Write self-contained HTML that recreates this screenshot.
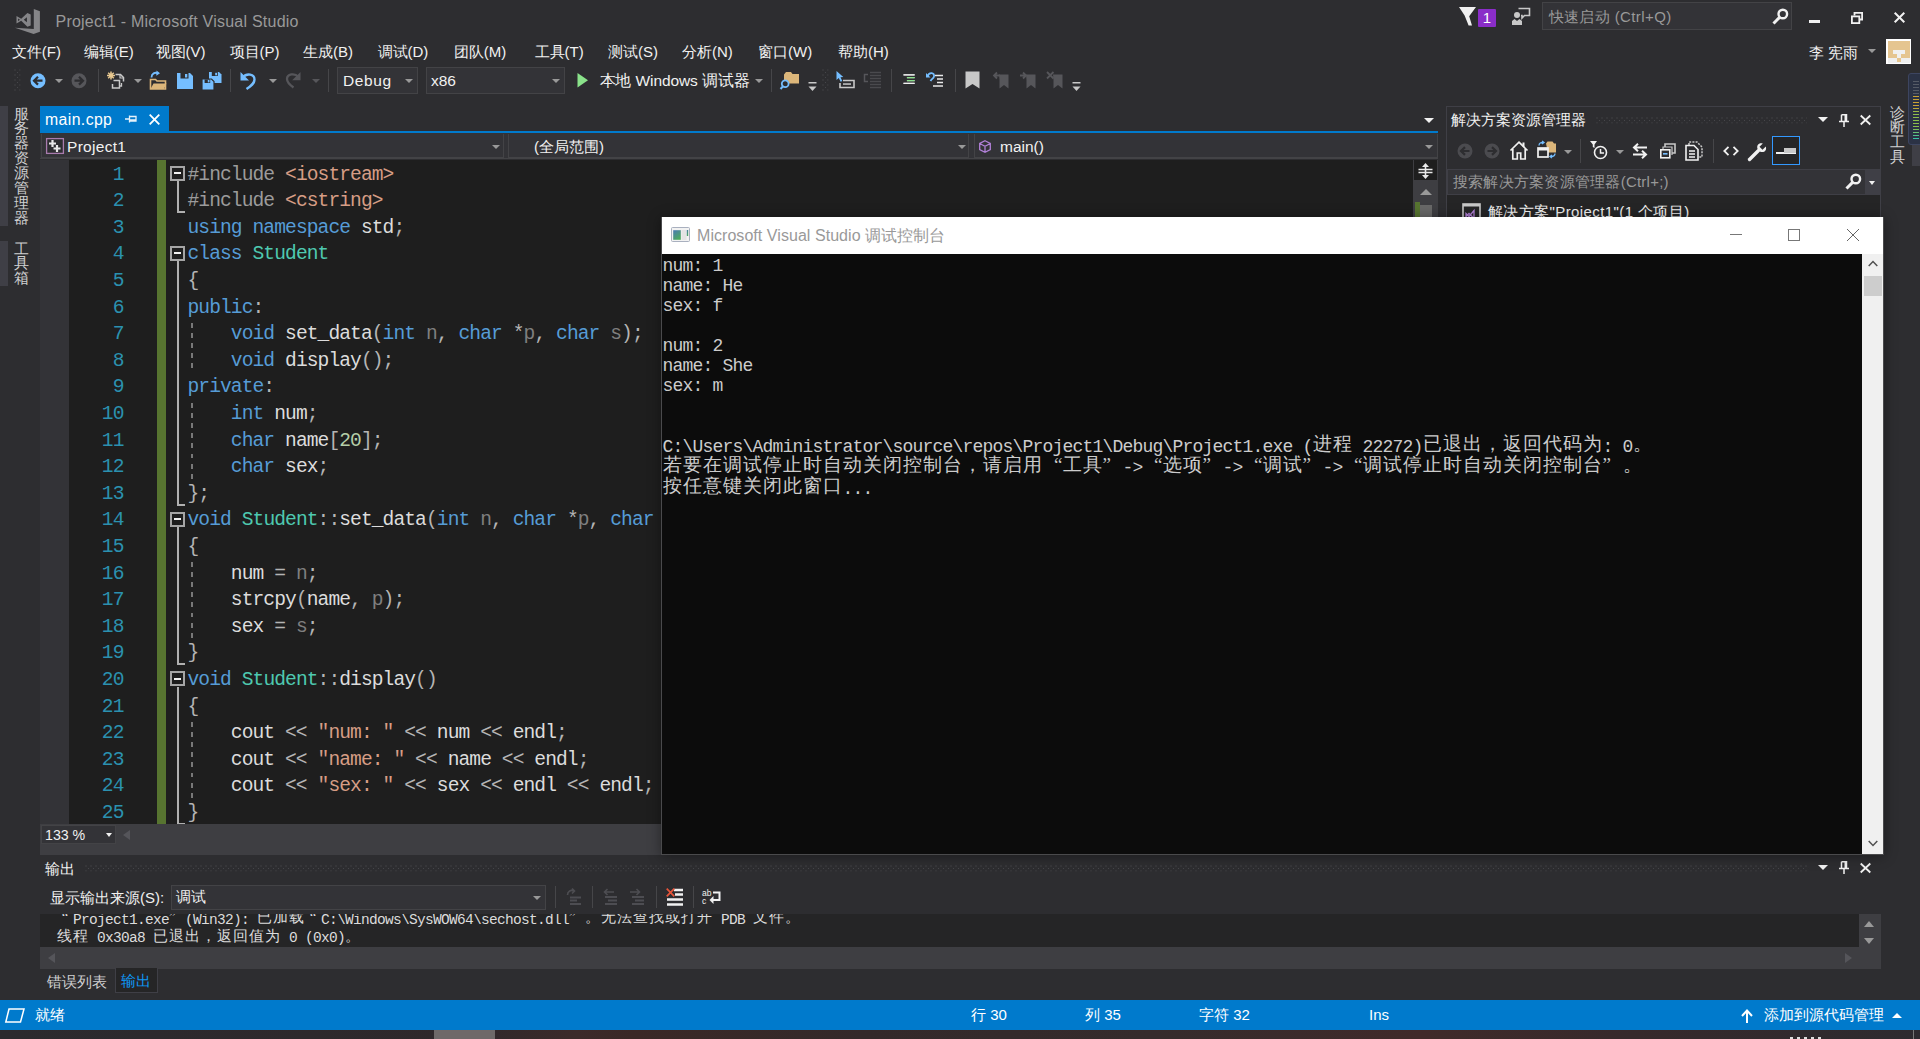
<!DOCTYPE html>
<html lang="zh">
<head>
<meta charset="utf-8">
<title>Project1 - Microsoft Visual Studio</title>
<style>
*{box-sizing:border-box;margin:0;padding:0}
html,body{width:1920px;height:1039px;overflow:hidden;background:#2d2d30}
body{position:relative;font-family:"Liberation Sans",sans-serif;font-size:15px;color:#f1f1f1;-webkit-font-smoothing:antialiased}
.a{position:absolute}
.t{position:absolute;white-space:pre;line-height:20px;height:20px}
svg{position:absolute;overflow:visible}
/* ---------- title / menu ---------- */
#title{left:55.500px;top:11.400px;font-size:16px;color:#999;letter-spacing:.23px;line-height:22px;height:22px}
.menu{top:42px;font-size:15px;color:#f1f1f1}
/* ---------- toolbar ---------- */
.combo{background:#333337;border:1px solid #434346;height:27px;top:67px}
.tbtxt{top:70.800px;font-size:15.5px;color:#f1f1f1}
.sep{width:1px;background:#464649;top:69px;height:23px}
.dd{width:0;height:0;border-left:4px solid transparent;border-right:4px solid transparent;border-top:4px solid #999}
.vt{font-size:14.8px;line-height:14.9px;width:15px;color:#d0d0d0;word-break:break-all;white-space:normal;text-align:center}
/* ---------- editor ---------- */
#editor{left:40px;top:160px;width:1397px;height:665px;background:#1e1e1e;overflow:hidden}
.code,.ln{font-family:"Liberation Mono",monospace;font-size:19.600px;letter-spacing:-.922px;line-height:26.600px;white-space:pre;color:#dcdcdc}
.ln{color:#2b91af;text-align:right}
.k{color:#569cd6}.ty{color:#4ec9b0}.s{color:#d69d85}.pp{color:#9b9b9b}.p{color:#7f7f7f}.i{color:#dcdcdc}.o{color:#b4b4b4}.n{color:#b5cea8}
.ob{left:169.800px;width:15.300px;height:15.300px;border:2px solid #a5a5a5;background:#1e1e1e}
.ig{left:191px;width:2.200px;background:repeating-linear-gradient(#787878 0 4.900px,#0000 4.900px 10.100px)}
/* ---------- console ---------- */
#con{left:662px;top:217px;width:1220px;height:637px;background:#0c0c0c}
.ct{font-family:"Liberation Mono",monospace;font-size:18px;letter-spacing:-.802px;line-height:20px;color:#ccc;white-space:pre}
.cj{font-size:19px;letter-spacing:1px;line-height:20px;font-family:"Liberation Serif",serif;position:relative;top:-2px}
.ql,.qr{display:inline-block;width:20px;letter-spacing:0}.ql{text-align:right}.qr{text-align:left}
.ot{font-family:"Liberation Mono",monospace;font-size:14.500px;letter-spacing:-.702px;line-height:17.500px;color:#dcdcdc;white-space:pre}
.oj{font-size:15px;letter-spacing:1px;font-family:"Liberation Serif",serif;position:relative;top:-1.500px}
.ol,.or{display:inline-block;width:16px;letter-spacing:0}.ol{text-align:center}.or{text-align:left}
/* ---------- status ---------- */
#status{left:0;top:1000px;width:1920px;height:30px;background:#007acc}
.st{font-size:15px;color:#fff}
</style>
</head>
<body>
<!-- TITLE -->
<div class="t" id="title">Project1 - Microsoft Visual Studio</div>

<svg style="left:0;top:0" width="48" height="40" viewBox="0 0 48 40"><path d="M33.800 9.100 39.900 11.200V31.800L33.600 34 14.900 27.800 33.800 28.900z" fill="#858588"/><path d="M16.500 15.900 21.200 18.700 27.400 13.100 30.700 14.500V25.600L27.400 26.800 21.200 20.800 16.500 23.500zM18.100 18.400V21.200L19.900 19.800zM23.800 19.800 26.900 22.200V17.300z" fill="#858588" fill-rule="evenodd"/></svg>
<!-- notifications / feedback / quick launch / window buttons -->
<svg style="left:1459px;top:7px" width="18" height="19" viewBox="0 0 18 19"><path d="M0 0h17L10.2 9.2 13 18.5H9.6L5.6 8.6z" fill="#f1f1f1"/></svg>
<div class="a" style="left:1478px;top:9px;width:18px;height:18px;background:#8a2dc8;border-radius:1px"></div>
<div class="t" style="left:1478px;top:8px;width:18px;text-align:center;font-size:15px;color:#fff">1</div>
<svg style="left:1512px;top:7px" width="19" height="19" viewBox="0 0 19 19"><path d="M6.5 1.5h11v7h-5l-2.5 2.5v-2.5h-1" fill="none" stroke="#c8c8c8" stroke-width="1.6"/><circle cx="5" cy="8" r="3" fill="#c8c8c8"/><path d="M0 18v-4l2.5-2 2.5 2 2.5-2 2.5 2v4z" fill="#c8c8c8"/></svg>
<div class="a" style="left:1542px;top:2px;width:250px;height:28px;background:#333337;border:1px solid #434346"></div>
<div class="t" style="left:1548.500px;top:7px;font-size:15px;color:#999;letter-spacing:.400px">快速启动 (Ctrl+Q)</div>
<svg style="left:1772px;top:8px" width="17" height="17" viewBox="0 0 17 17"><circle cx="10.8" cy="6" r="4.3" fill="none" stroke="#f1f1f1" stroke-width="2.4"/><path d="M7.6 9.4 1.5 15.5" stroke="#f1f1f1" stroke-width="3" stroke-linecap="butt"/></svg>
<div class="a" style="left:1809px;top:20px;width:11px;height:3px;background:#f1f1f1"></div>
<svg style="left:1851px;top:12px" width="12" height="12" viewBox="0 0 12 12"><path d="M3.5 3.5V.9h7.6v6.6H8.5" fill="none" stroke="#f1f1f1" stroke-width="1.8"/><rect x=".9" y="4.4" width="7.4" height="6.7" fill="none" stroke="#f1f1f1" stroke-width="1.8"/></svg>
<svg style="left:1894px;top:12px" width="11" height="11" viewBox="0 0 11 11"><path d="M.7.7l9.6 9.6M10.3.7.7 10.3" stroke="#f1f1f1" stroke-width="2"/></svg>
<div class="t" style="left:1809px;top:43px;font-size:15px;color:#f1f1f1">李 宪雨</div>
<div class="a dd" style="left:1868px;top:49px"></div>
<div class="a" style="left:1886px;top:39px;width:25px;height:25px;background:#fff"></div>
<div class="a" style="left:1888.200px;top:41.200px;width:21.400px;height:16.700px;background:#e5c590"></div>
<div class="a" style="left:1888.200px;top:57.900px;width:21.400px;height:4.900px;background:#efefef"></div>
<div class="a" style="left:1892.800px;top:50px;width:12.200px;height:3.900px;background:#f0f0f0"></div>
<div class="a" style="left:1897px;top:53.900px;width:4px;height:4px;background:#f0f0f0"></div>
<div class="a" style="left:1897px;top:57.900px;width:4px;height:4px;background:#e5c590"></div>
<!-- MENU -->
<div class="t menu" style="left:11.75px">文件(F)</div>
<div class="t menu" style="left:83.75px">编辑(E)</div>
<div class="t menu" style="left:155.5px">视图(V)</div>
<div class="t menu" style="left:229.5px">项目(P)</div>
<div class="t menu" style="left:303px">生成(B)</div>
<div class="t menu" style="left:377.5px">调试(D)</div>
<div class="t menu" style="left:453.75px">团队(M)</div>
<div class="t menu" style="left:534.5px">工具(T)</div>
<div class="t menu" style="left:608px">测试(S)</div>
<div class="t menu" style="left:682px">分析(N)</div>
<div class="t menu" style="left:758px">窗口(W)</div>
<div class="t menu" style="left:838px">帮助(H)</div>

<!-- TOOLBAR -->
<!-- grip -->
<svg style="left:14px;top:69px" width="6.500" height="22"><defs><pattern id="gp" width="5" height="5" patternUnits="userSpaceOnUse"><rect x=".500" y=".500" width="1" height="1" fill="#4d4d52"/><rect x="3" y="3" width="1" height="1" fill="#46464a"/></pattern></defs><rect width="6.500" height="22" fill="url(#gp)"/></svg>
<!-- back / forward -->
<svg style="left:30px;top:73px" width="16" height="16" viewBox="0 0 16 16"><circle cx="8" cy="7.7" r="7.5" fill="#75beff"/><path d="M12.5 7.7H4.5M8 3.8 4 7.7 8 11.6" fill="none" stroke="#2d2d30" stroke-width="2.2"/></svg>
<div class="a dd" style="left:55px;top:79px"></div>
<svg style="left:71px;top:73px" width="16" height="16" viewBox="0 0 16 16"><circle cx="8" cy="7.7" r="7.5" fill="#56565a"/><path d="M3.5 7.7h8M8 3.8l4 3.9-4 3.9" fill="none" stroke="#2d2d30" stroke-width="2.2"/></svg>
<div class="a sep" style="left:98px"></div>
<!-- new project -->
<svg style="left:107px;top:71px" width="19" height="19" viewBox="0 0 19 19"><path d="M8.5 3.5h5l3 3v4" fill="none" stroke="#c8c8c8" stroke-width="1.5"/><path d="M13 3.5v3.5h3.5" fill="none" stroke="#c8c8c8" stroke-width="1.2"/><path d="M6.5 9.5h6v7.5h-7v-4" fill="none" stroke="#c8c8c8" stroke-width="1.5"/><path d="M14.5 12v3h-2" fill="none" stroke="#c8c8c8" stroke-width="1.3"/><path d="M4 .5v8M0 4.5h8M1.2 1.7l5.6 5.6M6.8 1.7 1.2 7.3" stroke="#e8c890" stroke-width="1.5"/></svg>
<div class="a dd" style="left:134px;top:79px"></div>
<!-- open -->
<svg style="left:148px;top:70px" width="20" height="20" viewBox="0 0 20 20"><path d="M2.5 19V9.5h5l1.5 1.5h8.5V19z" fill="none" stroke="#dcb67a" stroke-width="1.6"/><path d="M2.5 19l3-5.5h13L16 19z" fill="#dcb67a"/><path d="M3.5 7.5C3.5 3.5 7 2 10 3.2" fill="none" stroke="#75beff" stroke-width="1.8"/><path d="M8.5.5 12 3.3 8.3 5.8z" fill="#75beff"/></svg>
<!-- save -->
<svg style="left:177px;top:73px" width="16" height="16" viewBox="0 0 16 16"><path d="M0 0h13l3 3v13H0z" fill="#75beff"/><rect x="3.5" y="0" width="8" height="5.5" fill="#2d2d30"/><rect x="8" y="1" width="2.3" height="3.5" fill="#75beff"/></svg>
<!-- save all -->
<svg style="left:202px;top:72px" width="20" height="18" viewBox="0 0 20 18"><path d="M7 0h10l2.5 2.5V11H7z" fill="#75beff"/><rect x="9.8" y="0" width="6" height="4" fill="#2d2d30"/><rect x="13.2" y=".8" width="1.8" height="2.5" fill="#75beff"/><path d="M0 7h9.5l2.5 2.500V18H0z" fill="#75beff" stroke="#2d2d30" stroke-width="1.2"/><rect x="2.6" y="7.4" width="5.6" height="3.6" fill="#2d2d30"/><rect x="5.8" y="8" width="1.7" height="2.4" fill="#75beff"/></svg>
<div class="a sep" style="left:230px"></div>
<!-- undo / redo -->
<svg style="left:240px;top:71px" width="17" height="19" viewBox="0 0 17 19"><path d="M2.5 6.500C7 1.500 14.500 3 14.500 8.500 14.500 12.500 11 15 6.500 18" fill="none" stroke="#75beff" stroke-width="2.4"/><path d="M.5 1v8.500h8.500z" fill="#75beff"/></svg>
<div class="a dd" style="left:269px;top:79px"></div>
<svg style="left:285px;top:71px" width="16" height="18" viewBox="0 0 16 18"><path d="M13.500 6C9.500 1.500 2 3 2 8c0 3.500 3 6 6.500 8.500" fill="none" stroke="#56565a" stroke-width="2.3"/><path d="M15.500 1v8.300H7.200z" fill="#56565a"/></svg>
<div class="a dd" style="left:312px;top:79px;border-top-color:#56565a"></div>
<div class="a sep" style="left:328px"></div>
<!-- combos -->
<div class="a combo" style="left:337px;width:81px"></div>
<div class="t tbtxt" style="left:343px;letter-spacing:.600px">Debug</div>
<div class="a dd" style="left:405px;top:79px"></div>
<div class="a combo" style="left:426px;width:139px"></div>
<div class="t tbtxt" style="left:431px">x86</div>
<div class="a dd" style="left:552px;top:79px"></div>
<!-- start -->
<svg style="left:577px;top:73px" width="12" height="15" viewBox="0 0 12 15"><path d="M.5 0 11 7.300.5 14.600z" fill="#8ae28a"/></svg>
<div class="t tbtxt" style="left:599.500px;letter-spacing:-.100px">本地 Windows 调试器</div>
<div class="a dd" style="left:755px;top:79px"></div>
<div class="a sep" style="left:771px"></div>
<!-- find in files -->
<svg style="left:780px;top:71px" width="20" height="19" viewBox="0 0 20 19"><path d="M4 12V3.500L6 1h5l1.500 2H19v9.500H10" fill="#dcb67a"/><circle cx="5.200" cy="12.700" r="3.400" fill="#2d2d30" stroke="#75beff" stroke-width="1.800"/><path d="M3 15.300.5 18" stroke="#75beff" stroke-width="2"/></svg>
<svg style="left:808px;top:82px" width="9" height="9" viewBox="0 0 9 9"><rect x=".5" y="0" width="8" height="1.500" fill="#c8c8c8"/><path d="M.5 4.500h8L4.500 9z" fill="#c8c8c8"/></svg>
<svg style="left:822px;top:69px" width="6.500" height="22"><rect width="6.500" height="22" fill="url(#gp)"/></svg>
<!-- misc text-editor buttons -->
<svg style="left:836px;top:71px" width="19" height="19" viewBox="0 0 19 19"><path d="M.500 0v9l2.300-2 1.800 3.800 1.700-.8L4.500 6.300 7.300 6z" fill="#75beff"/><path d="M7 9.500h11v7H4V12" fill="none" stroke="#c8c8c8" stroke-width="1.600"/><rect x="7" y="12.300" width="8" height="1.500" fill="#c8c8c8"/></svg>
<svg style="left:863px;top:71px" width="19" height="19" viewBox="0 0 19 19"><path d="M5 3.500H1.500v7H5" fill="none" stroke="#56565a" stroke-width="1.500"/><path d="M7 1.500h11M7 4.500h11M7 7.500h11M7 10.500h11M7 13.500h11M7 16.500h11" stroke="#4a4a4e" stroke-width="1.400"/></svg>
<div class="a sep" style="left:891px"></div>
<svg style="left:903px;top:74px" width="13" height="12" viewBox="0 0 14 14"><path d="M0 1h13M4 4.300h9M4 7.700h9M0 11h13" stroke="#c8c8c8" stroke-width="1.500"/><path d="M4 4.300h9M4 7.700h9" stroke="#8ae28a" stroke-width="1.500"/><path d="M0 1h13M0 11h13" stroke="#f1f1f1" stroke-width="1.500"/></svg>
<svg style="left:926px;top:71px" width="18" height="18" viewBox="0 0 18 18"><path d="M1.500 5.500C3 .5 9 1.500 8 5.500 7.500 7.500 5.500 8 4.500 10" fill="none" stroke="#75beff" stroke-width="1.800"/><path d="M0 2v4.500h4.500z" fill="#75beff"/><path d="M9 4.500h8M11 8h6M11 11.500h6M7 15h10" stroke="#e8e8e8" stroke-width="1.500"/></svg>
<div class="a sep" style="left:955px"></div>
<!-- bookmarks -->
<svg style="left:965px;top:71px" width="15" height="18" viewBox="0 0 15 18"><path d="M.5.500h14v17L7.500 13 .5 17.500z" fill="#c8c8c8"/></svg>
<svg style="left:992px;top:71px" width="18" height="18" viewBox="0 0 18 18"><path d="M7 3.500h9.500v14L12 14l-4.500 3.500V9" fill="#56565a"/><path d="M8 4.500H2.500M5 1.500 2 4.500 5 7.500" fill="none" stroke="#56565a" stroke-width="1.800"/></svg>
<svg style="left:1019px;top:71px" width="18" height="18" viewBox="0 0 18 18"><path d="M7 3.500h9.500v14L12 14l-4.500 3.500V9" fill="#56565a"/><path d="M1 4.500h5.500M4 1.500 7 4.500 4 7.500" fill="none" stroke="#56565a" stroke-width="1.800"/></svg>
<svg style="left:1046px;top:71px" width="18" height="18" viewBox="0 0 18 18"><path d="M7 3.500h9.500v14L12 14l-4.500 3.500V9" fill="#56565a"/><path d="M1 1l6.500 6.500M7.500 1 1 7.500" fill="none" stroke="#56565a" stroke-width="1.800"/></svg>
<svg style="left:1072px;top:82px" width="9" height="9" viewBox="0 0 9 9"><rect x=".5" y="0" width="8" height="1.500" fill="#c8c8c8"/><path d="M.5 4.500h8L4.500 9z" fill="#c8c8c8"/></svg>

<!-- LEFTSTRIP -->
<div class="a" style="left:0;top:106px;width:8px;height:120px;background:#3f3f46"></div>
<div class="a" style="left:0;top:241px;width:8px;height:45px;background:#3f3f46"></div>
<div class="a vt" style="left:14px;top:106.500px">服务器资源管理器</div>
<div class="a vt" style="left:14px;top:241.500px">工具箱</div>

<!-- TABS -->
<div class="a" style="left:40px;top:106px;width:129px;height:25px;background:#007acc"></div>
<div class="a" style="left:40px;top:131px;width:1398px;height:2px;background:#007acc"></div>
<div class="t" style="left:45px;top:109.600px;font-size:15.800px;color:#fff;letter-spacing:.400px">main.cpp</div>
<svg style="left:125px;top:113px" width="12" height="12" viewBox="0 0 12 12"><path d="M0 6h4.500M4.500 2.500v7M4.500 3.500h6.500v4.500H4.500M4.500 7h6.500" fill="none" stroke="#e6f2fa" stroke-width="1.300"/></svg>
<svg style="left:149px;top:114px" width="11" height="11" viewBox="0 0 11 11"><path d="M.700.700l9.600 9.600M10.300.700.700 10.300" stroke="#fff" stroke-width="1.800"/></svg>
<div class="a" style="left:1424px;top:118px;width:0;height:0;border-left:5px solid transparent;border-right:5px solid transparent;border-top:5px solid #f1f1f1"></div>
<!-- nav bar -->
<div class="a" style="left:40px;top:133px;width:1398px;height:26px;background:#333337;border-bottom:1px solid #434346"></div>
<div class="a" style="left:41px;top:134px;width:463px;height:24px;border:1px solid #434346;border-top:none"></div>
<div class="a" style="left:508px;top:134px;width:461px;height:24px;border:1px solid #434346;border-top:none"></div>
<div class="a" style="left:974px;top:134px;width:464px;height:24px;border:1px solid #434346;border-top:none"></div>
<svg style="left:46px;top:138px" width="18" height="16" viewBox="0 0 18 16"><rect x=".600" y=".600" width="16.800" height="14.800" fill="#2d2d30" stroke="#a87bad" stroke-width="1.300"/><path d="M3 5.500h7M6.500 2v7M7.500 10.500h7M11 7v7" stroke="#e8e8e8" stroke-width="2.200"/></svg>
<div class="t" style="left:67px;top:137px;font-size:15.500px;color:#f1f1f1;letter-spacing:.3px">Project1</div>
<div class="a dd" style="left:492px;top:145px"></div>
<div class="t" style="left:534px;top:137px;font-size:15px;color:#f1f1f1">(全局范围)</div>
<div class="a dd" style="left:958px;top:145px"></div>
<svg style="left:979px;top:140px" width="12" height="13" viewBox="0 0 12 13"><path d="M6 .700 11.300 3.500v6L6 12.300.700 9.500v-6zM.700 3.500 6 6.300l5.300-2.800M6 6.300v6" fill="none" stroke="#b180d7" stroke-width="1.300"/></svg>
<div class="t" style="left:1000px;top:137px;font-size:15.500px;color:#f1f1f1">main()</div>
<div class="a dd" style="left:1425px;top:145px"></div>

<!-- EDITOR -->
<div class="a" id="editor"></div>
<div class="a" style="left:40px;top:160px;width:29px;height:664px;background:#333337"></div>
<div class="a" style="left:157px;top:160px;width:9px;height:664px;background:#577430"></div>
<div class="a" id="clip" style="left:0;top:160px;width:1413px;height:664px;overflow:hidden"><div class="a" style="left:0;top:-160px;width:1413px;height:900px">
<div class="a ln" style="left:60px;top:161.700px;width:63.500px">1
2
3
4
5
6
7
8
9
10
11
12
13
14
15
16
17
18
19
20
21
22
23
24
25
26</div>
<div class="a" id="outl" style="left:0;top:0;width:0;height:0"><div class="a ob" style="top:165.80px"></div><div class="a" style="left:173.700px;top:172.40px;width:7.500px;height:2.100px;background:#f0f0f0"></div><div class="a" style="left:177px;top:181.10px;width:2px;height:31.80px;background:#b0b0b0"></div><div class="a" style="left:177px;top:210.90px;width:8px;height:2px;background:#b0b0b0"></div><div class="a ob" style="top:245.60px"></div><div class="a" style="left:173.700px;top:252.20px;width:7.500px;height:2.100px;background:#f0f0f0"></div><div class="a" style="left:177px;top:260.90px;width:2px;height:244.60px;background:#b0b0b0"></div><div class="a" style="left:177px;top:503.50px;width:8px;height:2px;background:#b0b0b0"></div><div class="a ob" style="top:511.60px"></div><div class="a" style="left:173.700px;top:518.20px;width:7.500px;height:2.100px;background:#f0f0f0"></div><div class="a" style="left:177px;top:526.90px;width:2px;height:138.20px;background:#b0b0b0"></div><div class="a" style="left:177px;top:663.10px;width:8px;height:2px;background:#b0b0b0"></div><div class="a ob" style="top:671.20px"></div><div class="a" style="left:173.700px;top:677.80px;width:7.500px;height:2.100px;background:#f0f0f0"></div><div class="a" style="left:177px;top:686.50px;width:2px;height:138.20px;background:#b0b0b0"></div><div class="a" style="left:177px;top:822.70px;width:8px;height:2px;background:#b0b0b0"></div><div class="a ig" style="top:322.70px;height:50.10px"></div><div class="a ig" style="top:402.50px;height:76.70px"></div><div class="a ig" style="top:562.10px;height:76.70px"></div><div class="a ig" style="top:721.70px;height:76.70px"></div></div>
<div class="a code" style="left:187.500px;top:161.700px"><span class="pp">#include</span> <span class="s">&lt;iostream&gt;</span>
<span class="pp">#include</span> <span class="s">&lt;cstring&gt;</span>
<span class="k">using</span> <span class="k">namespace</span> std<span class="o">;</span>
<span class="k">class</span> <span class="ty">Student</span>
<span class="o">{</span>
<span class="k">public</span><span class="o">:</span>
    <span class="k">void</span> set_data<span class="o">(</span><span class="k">int</span> <span class="p">n</span><span class="o">,</span> <span class="k">char</span> <span class="o">*</span><span class="p">p</span><span class="o">,</span> <span class="k">char</span> <span class="p">s</span><span class="o">);</span>
    <span class="k">void</span> display<span class="o">();</span>
<span class="k">private</span><span class="o">:</span>
    <span class="k">int</span> num<span class="o">;</span>
    <span class="k">char</span> name<span class="o">[</span><span class="n">20</span><span class="o">];</span>
    <span class="k">char</span> sex<span class="o">;</span>
<span class="o">};</span>
<span class="k">void</span> <span class="ty">Student</span><span class="o">::</span>set_data<span class="o">(</span><span class="k">int</span> <span class="p">n</span><span class="o">,</span> <span class="k">char</span> <span class="o">*</span><span class="p">p</span><span class="o">,</span> <span class="k">char</span> <span class="p">s</span><span class="o">)</span>
<span class="o">{</span>
    num <span class="o">=</span> <span class="p">n</span><span class="o">;</span>
    strcpy<span class="o">(</span>name<span class="o">,</span> <span class="p">p</span><span class="o">);</span>
    sex <span class="o">=</span> <span class="p">s</span><span class="o">;</span>
<span class="o">}</span>
<span class="k">void</span> <span class="ty">Student</span><span class="o">::</span>display<span class="o">()</span>
<span class="o">{</span>
    cout <span class="o">&lt;&lt;</span> <span class="s">"num: "</span> <span class="o">&lt;&lt;</span> num <span class="o">&lt;&lt;</span> endl<span class="o">;</span>
    cout <span class="o">&lt;&lt;</span> <span class="s">"name: "</span> <span class="o">&lt;&lt;</span> name <span class="o">&lt;&lt;</span> endl<span class="o">;</span>
    cout <span class="o">&lt;&lt;</span> <span class="s">"sex: "</span> <span class="o">&lt;&lt;</span> sex <span class="o">&lt;&lt;</span> endl <span class="o">&lt;&lt;</span> endl<span class="o">;</span>
<span class="o">}</span>
</div>
</div></div>
<!-- editor scrollbars -->
<div class="a" style="left:1413px;top:160px;width:25px;height:664px;background:#3e3e42"></div>
<div class="a" style="left:1414px;top:160px;width:23px;height:20px;background:#1e1e1e"></div>
<svg style="left:1418px;top:163px" width="15" height="16" viewBox="0 0 15 16"><path d="M.5 6.500h14M.5 9.500h14" stroke="#e8e8e8" stroke-width="1.600"/><path d="M7.500 0 11 4H4zM7.500 16 11 12H4z" fill="#e8e8e8"/><path d="M7.500 2v12" stroke="#e8e8e8" stroke-width="1.600"/></svg>
<div class="a" style="left:1419.500px;top:188.500px;width:0;height:0;border-left:6px solid transparent;border-right:6px solid transparent;border-bottom:6.500px solid #999"></div>
<div class="a" style="left:1415px;top:202px;width:5px;height:20px;background:#577430"></div>
<div class="a" style="left:1420px;top:204.500px;width:12px;height:20px;background:#686868"></div>
<div class="a" style="left:40px;top:824px;width:1398px;height:31px;background:#3e3e42"></div>
<div class="a" style="left:41px;top:824.500px;width:74.500px;height:19.500px;background:#333337;border:1px solid #434346"></div>
<div class="t" style="left:45px;top:824.500px;font-size:14.200px;color:#f1f1f1;letter-spacing:0">133 %</div>
<div class="a" style="left:105.500px;top:833px;width:0;height:0;border-left:3.500px solid transparent;border-right:3.500px solid transparent;border-top:4px solid #f1f1f1"></div>
<div class="a" style="left:123px;top:829.500px;width:0;height:0;border-top:5.500px solid transparent;border-bottom:5.500px solid transparent;border-right:7px solid #55555a"></div>

<!-- SOLUTION -->
<div class="a" style="left:1446px;top:106px;width:435px;height:112px;background:#2d2d30;border:1px solid #3f3f46"></div>
<div class="t" style="left:1450.500px;top:109.500px;font-size:15px;color:#f1f1f1">解决方案资源管理器</div>
<svg style="left:1596px;top:117px" width="211" height="6.500"><defs><pattern id="gp2" width="5" height="5" patternUnits="userSpaceOnUse"><rect x=".500" y=".500" width="1" height="1" fill="#4d4d52"/><rect x="3" y="3" width="1" height="1" fill="#46464a"/></pattern></defs><rect width="211" height="6.500" fill="url(#gp2)"/></svg>
<div class="a" style="left:1818px;top:117px;width:0;height:0;border-left:5px solid transparent;border-right:5px solid transparent;border-top:5px solid #f1f1f1"></div>
<svg style="left:1839px;top:113.500px" width="10" height="13" viewBox="0 0 10 13"><path d="M2.500.700h5v6.500M2.500.700v6.500M0 7.500h10M5 7.500V13" fill="none" stroke="#f1f1f1" stroke-width="1.500"/><rect x="5.500" y="1" width="2" height="6" fill="#f1f1f1"/></svg>
<svg style="left:1860px;top:115px" width="11" height="10" viewBox="0 0 11 10"><path d="M.700.500l9.600 9M10.300.500.700 9.500" stroke="#f1f1f1" stroke-width="1.800"/></svg>
<!-- sol toolbar -->
<svg style="left:1457px;top:143px" width="16" height="16" viewBox="0 0 16 16"><circle cx="8" cy="8" r="7.500" fill="#4b4b4f"/><path d="M12.500 8H4.500M8 4.100 4 8 8 11.900" fill="none" stroke="#2d2d30" stroke-width="2.200"/></svg>
<svg style="left:1484px;top:143px" width="16" height="16" viewBox="0 0 16 16"><circle cx="8" cy="8" r="7.500" fill="#4b4b4f"/><path d="M3.500 8h8M8 4.100 12 8 8 11.900" fill="none" stroke="#2d2d30" stroke-width="2.200"/></svg>
<svg style="left:1510px;top:141px" width="18" height="19" viewBox="0 0 18 19"><path d="M.500 9.500 9 1.200 17.500 9.500M2.800 8v10h4.500v-6h3.400v6h4.500V8" fill="none" stroke="#f1f1f1" stroke-width="1.700"/><rect x="12.500" y="1.500" width="2" height="4" fill="#f1f1f1"/></svg>
<svg style="left:1537px;top:141px" width="20" height="19" viewBox="0 0 20 19"><path d="M9 2.500 10.500.500h5L17 2.500h2v9H11" fill="#dcb67a"/><rect x="1" y="7" width="10" height="9" fill="#2d2d30" stroke="#f1f1f1" stroke-width="1.700"/><rect x="1" y="7" width="10" height="2.500" fill="#f1f1f1"/><path d="M2 4.500C2 2 4 1.500 6 1.500M5 0l2 1.500L5 3M18 12.500c0 2.500-2 3-4 3M15 14l-2 1.500 2 1.500" fill="none" stroke="#75beff" stroke-width="1.300"/></svg>
<div class="a dd" style="left:1564px;top:150px"></div>
<div class="a sep" style="left:1580px;top:139px;height:24px"></div>
<svg style="left:1590px;top:141px" width="18" height="19" viewBox="0 0 18 19"><circle cx="10.500" cy="11.500" r="6" fill="none" stroke="#f1f1f1" stroke-width="1.600"/><path d="M10.500 8v4h3.500" fill="none" stroke="#f1f1f1" stroke-width="1.500"/><path d="M0 0h7L4.500 3.500V7L2.800 6V3.500z" fill="#f1f1f1"/></svg>
<div class="a dd" style="left:1616px;top:150px"></div>
<svg style="left:1632px;top:143px" width="16" height="16" viewBox="0 0 16 16"><path d="M15 4.500H2.500M6 .800 2 4.500 6 8.200M1 11.500h12.500M10 7.800l4 3.700-4 3.700" fill="none" stroke="#f1f1f1" stroke-width="2"/></svg>
<svg style="left:1660px;top:143px" width="16" height="16" viewBox="0 0 16 16"><path d="M5 4V1h10v9h-3" fill="none" stroke="#c8c8c8" stroke-width="1.600"/><path d="M3 7V4h9v8" fill="none" stroke="#c8c8c8" stroke-width="1.200"/><rect x=".800" y="6.800" width="9" height="8" fill="#2d2d30" stroke="#f1f1f1" stroke-width="1.600"/><path d="M3 10.800h4.500" stroke="#75beff" stroke-width="1.600"/></svg>
<svg style="left:1685px;top:141px" width="19" height="20" viewBox="0 0 19 20"><path d="M4 4V1h8l5 5v10h-3" fill="none" stroke="#c8c8c8" stroke-width="1.500" stroke-dasharray="2 1.200"/><path d="M1 4.500h8l4 4V19H1z" fill="#2d2d30" stroke="#f1f1f1" stroke-width="1.600"/><path d="M4 10h6M4 13h6M4 16h6" stroke="#f1f1f1" stroke-width="1.300"/></svg>
<div class="a sep" style="left:1713px;top:139px;height:24px"></div>
<svg style="left:1723px;top:146px" width="16" height="10" viewBox="0 0 16 10"><path d="M5.500.800 1.300 5l4.200 4.200M10.500.800 14.700 5l-4.200 4.200" fill="none" stroke="#f1f1f1" stroke-width="1.800"/></svg>
<svg style="left:1748px;top:142px" width="19" height="19" viewBox="0 0 19 19"><path d="M1.500 17.500 10.500 8.500" stroke="#f1f1f1" stroke-width="3.400" stroke-linecap="round"/><path d="M17.800 4.500 14.500 7.800l-3-3L14.800 1.500C11 .200 8.200 3.300 9.600 7l2.700 2.700c3.700 1.400 6.800-1.400 5.500-5.200z" fill="#f1f1f1"/></svg>
<div class="a" style="left:1772px;top:136px;width:27.500px;height:29px;border:1px solid #3399ff;background:#252526"></div>
<div class="a" style="left:1776px;top:151.500px;width:20px;height:2.500px;background:#f1f1f1"></div>
<div class="a" style="left:1784px;top:147.500px;width:12px;height:5px;background:#c8c8c8"></div>
<!-- sol search -->
<div class="a" style="left:1447px;top:168.500px;width:433px;height:26px;background:#333337;border:1px solid #3f3f46"></div>
<div class="a" style="left:1865px;top:169.500px;width:14px;height:24px;background:#3f3f46"></div>
<div class="t" style="left:1453px;top:172px;font-size:15px;color:#999;letter-spacing:.240px">搜索解决方案资源管理器(Ctrl+;)</div>
<svg style="left:1845px;top:173px" width="17" height="17" viewBox="0 0 17 17"><circle cx="10.800" cy="6" r="4.300" fill="none" stroke="#f1f1f1" stroke-width="2.400"/><path d="M7.600 9.400 1.500 15.500" stroke="#f1f1f1" stroke-width="3"/></svg>
<div class="a" style="left:1868.500px;top:181px;width:0;height:0;border-left:3.500px solid transparent;border-right:3.500px solid transparent;border-top:4px solid #f1f1f1"></div>
<!-- sol tree -->
<div class="a" style="left:1447px;top:195px;width:433px;height:24px;background:#252526"></div>
<svg style="left:1462px;top:203px" width="19" height="16" viewBox="0 0 19 16"><rect x="1" y="1" width="17" height="16" fill="none" stroke="#c8c8c8" stroke-width="1.600"/><rect x="1" y="1" width="17" height="2.500" fill="#c8c8c8"/><path d="M4 10.500l3 3 5-6v8l-5-5-3 3z" fill="none" stroke="#b180d7" stroke-width="1.300"/></svg>
<div class="t" style="left:1488px;top:201.500px;font-size:15px;color:#f1f1f1;letter-spacing:.400px">解决方案"Project1"(1 个项目)</div>

<!-- RIGHTSTRIP -->
<div class="a vt" style="left:1890px;top:105.500px">诊断工具</div>
<div class="a" style="left:1912px;top:145px;width:8px;height:21px;background:#3f3f46"></div>
<div class="a" style="left:1908px;top:73px;width:14px;height:72px;background:#2b3245;border:1px solid #3d4560;border-radius:3px 0 0 3px"></div>
<div class="a" style="left:1913px;top:81px;width:6px;height:58px;background:repeating-linear-gradient(#0000 0 1.500px,#2b3245 1.500px 3px),linear-gradient(#555a66 0 22%,#c9a233 26% 45%,#8bbf4a 55% 80%,#35c2a8 100%)"></div>

<!-- OUTPUT -->
<div class="t" style="left:45px;top:858.500px;font-size:15px;color:#f1f1f1">输出</div>
<svg style="left:85px;top:865px" width="1722" height="6.500"><rect width="1722" height="6.500" fill="url(#gp2)"/></svg>
<div class="a" style="left:1818px;top:865px;width:0;height:0;border-left:5px solid transparent;border-right:5px solid transparent;border-top:5px solid #f1f1f1"></div>
<svg style="left:1839px;top:861px" width="10" height="13" viewBox="0 0 10 13"><path d="M2.500.700h5v6.500M2.500.700v6.500M0 7.500h10M5 7.500V13" fill="none" stroke="#f1f1f1" stroke-width="1.500"/><rect x="5.500" y="1" width="2" height="6" fill="#f1f1f1"/></svg>
<svg style="left:1859.500px;top:863px" width="11" height="10" viewBox="0 0 11 10"><path d="M.700.500l9.600 9M10.300.500.700 9.500" stroke="#f1f1f1" stroke-width="1.800"/></svg>
<div class="t" style="left:50px;top:888px;font-size:15px;color:#f1f1f1">显示输出来源(S):</div>
<div class="a" style="left:171px;top:885px;width:375px;height:25px;background:#333337;border:1px solid #434346"></div>
<div class="t" style="left:176px;top:887px;font-size:15px;color:#f1f1f1">调试</div>
<div class="a dd" style="left:533px;top:896px"></div>
<div class="a sep" style="left:555px;top:886px;height:22px"></div>
<svg style="left:565px;top:888px" width="17" height="18" viewBox="0 0 17 18"><path d="M2.500 7C2.500 3 6 1.500 9 3M7 .500l2.500 2.500L7 5.500" fill="none" stroke="#4d4d52" stroke-width="1.600"/><path d="M5 9.500h11M5 12.500h7M5 16h11" stroke="#4d4d52" stroke-width="2"/></svg>
<div class="a sep" style="left:592px;top:886px;height:22px"></div>
<svg style="left:602px;top:889px" width="16" height="16" viewBox="0 0 16 16"><path d="M12 3H2.500M5.500 0 2.500 3l3 3" fill="none" stroke="#4d4d52" stroke-width="1.600"/><path d="M3 8h12M6 11.500h9M3 15h12" stroke="#4d4d52" stroke-width="1.800"/></svg>
<svg style="left:629px;top:889px" width="16" height="16" viewBox="0 0 16 16"><path d="M1 3h9.500M7.500 0l3 3-3 3" fill="none" stroke="#4d4d52" stroke-width="1.600"/><path d="M3 8h12M6 11.500h9M3 15h12" stroke="#4d4d52" stroke-width="1.800"/></svg>
<div class="a sep" style="left:656px;top:886px;height:22px"></div>
<svg style="left:666px;top:887.500px" width="17" height="19" viewBox="0 0 17 19"><path d="M8 2h9M9 6.500h8M1 11.500h16M1 16.500h16" stroke="#f1f1f1" stroke-width="2.400"/><path d="M.700.700l7.600 7.600M8.300.700.700 8.300" stroke="#e8553a" stroke-width="1.700"/></svg>
<div class="a sep" style="left:693px;top:886px;height:22px"></div>
<svg style="left:702px;top:888.500px" width="19" height="17" viewBox="0 0 19 17"><text x="0" y="7" font-family="Liberation Sans" font-size="8.500" fill="#f1f1f1">ab</text><text x="0" y="14.500" font-family="Liberation Sans" font-size="8.500" fill="#f1f1f1">c</text><path d="M11 3.500h6.500v7.500H9" fill="none" stroke="#f1f1f1" stroke-width="2"/><path d="M11.500 7 7.500 11l4 4z" fill="#f1f1f1"/></svg>
<!-- output text -->
<div class="a" style="left:40px;top:914px;width:1819px;height:33px;background:#252526;overflow:hidden">
<div class="a ot" style="left:17px;top:-3.500px"><span class="oj"><span class="ol">“</span></span>Project1.exe<span class="oj"><span class="or">”</span></span>(Win32): <span class="oj">已加载<span class="ol">“</span></span>C:\Windows\SysWOW64\sechost.dll<span class="oj"><span class="or">”</span>。无法查找或打开</span> PDB <span class="oj">文件。</span>
<span class="oj">线程</span> 0x30a8 <span class="oj">已退出，返回值为</span> 0 (0x0)<span class="oj">。</span></div></div>
<div class="a" style="left:1859px;top:914px;width:22px;height:33px;background:#3e3e42"></div>
<div class="a" style="left:1864px;top:921px;width:0;height:0;border-left:5.500px solid transparent;border-right:5.500px solid transparent;border-bottom:6.500px solid #999"></div>
<div class="a" style="left:1864px;top:937.500px;width:0;height:0;border-left:5.500px solid transparent;border-right:5.500px solid transparent;border-top:6.500px solid #999"></div>
<div class="a" style="left:40px;top:947px;width:1841px;height:22px;background:#3e3e42"></div>
<div class="a" style="left:48px;top:952.500px;width:0;height:0;border-top:5.500px solid transparent;border-bottom:5.500px solid transparent;border-right:7px solid #55555a"></div>
<div class="a" style="left:1845px;top:952.500px;width:0;height:0;border-top:5.500px solid transparent;border-bottom:5.500px solid transparent;border-left:7px solid #55555a"></div>
<!-- bottom tabs -->
<div class="t" style="left:47px;top:971.500px;font-size:15px;color:#d0d0d0">错误列表</div>
<div class="a" style="left:114.500px;top:968px;width:43px;height:24.500px;background:#252526;border:1px solid #3f3f46;border-top:none"></div>
<div class="t" style="left:120.500px;top:971px;font-size:15px;color:#0e97f5">输出</div>

<!-- CONSOLE -->
<div class="a" style="left:661px;top:217px;width:1223px;height:638px;background:#4a4a4c;box-shadow:0 1px 12px rgba(0,0,0,.40)"></div><div class="a" id="con"></div>
<div class="a" style="left:662px;top:217px;width:1221px;height:37px;background:#fff"></div>
<svg style="left:671px;top:227px" width="19" height="15" viewBox="0 0 19 15"><defs><linearGradient id="cg" x1="0" y1="0" x2="0.600" y2="1"><stop offset="0" stop-color="#4a78b4"/><stop offset="1" stop-color="#4caa5e"/></linearGradient></defs><rect x=".500" y=".500" width="18" height="14" rx="1" fill="#f2f2f2" stroke="#a9b0bf" stroke-width="1"/><rect x="2.200" y="3.200" width="7.600" height="9.600" fill="url(#cg)"/><rect x="10.500" y="3" width="5" height="10" fill="#e4e4e4"/><rect x="15.800" y="3" width="1.400" height="6" fill="url(#cg)"/></svg>
<div class="t" style="left:697px;top:224.700px;font-size:16px;line-height:22px;height:22px;color:#999;letter-spacing:.050px">Microsoft Visual Studio 调试控制台</div>
<div class="a" style="left:1730px;top:234px;width:12px;height:1px;background:#777"></div>
<div class="a" style="left:1788px;top:229px;width:12px;height:12px;border:1px solid #777"></div>
<svg style="left:1847px;top:229px" width="12" height="12" viewBox="0 0 12 12"><path d="M0 0l12 12M12 0 0 12" stroke="#666" stroke-width="1"/></svg>
<div class="a ct" style="left:662.500px;top:255.700px">num: 1
name: He
sex: f

num: 2
name: She
sex: m


C:\Users\Administrator\source\repos\Project1\Debug\Project1.exe (<span class="cj">进程</span> 22272)<span class="cj">已退出，返回代码为</span>: 0<span class="cj">。</span>
<span class="cj">若要在调试停止时自动关闭控制台，请启用<span class="ql">“</span>工具<span class="qr">”</span></span>-&gt;<span class="cj"><span class="ql">“</span>选项<span class="qr">”</span></span>-&gt;<span class="cj"><span class="ql">“</span>调试<span class="qr">”</span></span>-&gt;<span class="cj"><span class="ql">“</span>调试停止时自动关闭控制台<span class="qr">”</span>。</span>
<span class="cj">按任意键关闭此窗口</span>...</div>
<div class="a" style="left:1862px;top:254px;width:21px;height:600px;background:#f0f0f0"></div>
<svg style="left:1868px;top:260px" width="10" height="7" viewBox="0 0 10 7"><path d="M.700 6 5 1.500 9.300 6" fill="none" stroke="#505050" stroke-width="1.500"/></svg>
<svg style="left:1868px;top:839.500px" width="10" height="7" viewBox="0 0 10 7"><path d="M.700 1 5 5.500 9.300 1" fill="none" stroke="#505050" stroke-width="1.500"/></svg>
<div class="a" style="left:1864px;top:276px;width:18px;height:20px;background:#cdcdcd"></div>

<!-- STATUS -->
<div class="a" id="status"></div>
<svg style="left:5px;top:1008px" width="20" height="15" viewBox="0 0 20 15"><path d="M4 1h15l-3.500 13H.800z" fill="none" stroke="#fff" stroke-width="1.500"/></svg>
<div class="t st" style="left:35px;top:1005px">就绪</div>
<div class="t st" style="left:971px;top:1005px">行 30</div>
<div class="t st" style="left:1085px;top:1005px">列 35</div>
<div class="t st" style="left:1199px;top:1005px">字符 32</div>
<div class="t st" style="left:1369px;top:1005px">Ins</div>
<svg style="left:1741px;top:1008.500px" width="12" height="14" viewBox="0 0 12 14"><path d="M6 14V2M1 7l5-5.500L11 7" fill="none" stroke="#fff" stroke-width="2"/></svg>
<div class="t st" style="left:1764px;top:1005px">添加到源代码管理</div>
<div class="a" style="left:1892px;top:1013px;width:0;height:0;border-left:5px solid transparent;border-right:5px solid transparent;border-bottom:5px solid #fff"></div>

<!-- BOTTOM -->
<div class="a" style="left:0;top:1030px;width:1920px;height:9px;background:linear-gradient(90deg,#2b2a2e 0,#2e282b 24%,#3b2a2a 30%,#3a2826 33%,#33292a 45%,#352b2c 60%,#402a2a 74%,#36292b 85%,#2d2a2f 100%)"></div>
<div class="a" style="left:434px;top:1030px;width:61px;height:9px;background:#6e6969"></div>
<div class="a" style="left:1913px;top:1030px;width:1px;height:9px;background:#777"></div>
<div class="a" style="left:1790px;top:1037px;width:34px;height:2px;background:repeating-linear-gradient(90deg,#ddd 0 3px,#0000 3px 7px)"></div>

</body>
</html>
